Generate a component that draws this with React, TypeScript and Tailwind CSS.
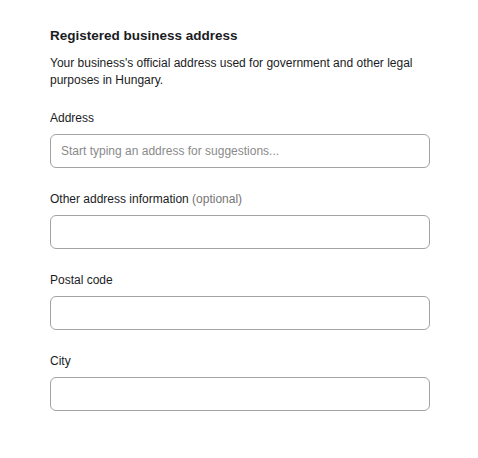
const fields = [
  { label: "Address", placeholder: "Start typing an address for suggestions..." },
  { label: "Other address information", optional: true },
  { label: "Postal code" },
  { label: "City" },
];

export default function App() {
  return (
    <div className="min-h-screen bg-white font-['Liberation_Sans',Arial,sans-serif] text-[#1a1c23]">
      <div className="w-[380px] pl-[50px] pt-[26px] box-content">
        <h2 className="text-[13.5px] font-bold leading-[20px]">Registered business address</h2>
        <p className="mt-[9px] text-[12px] leading-[17px]">
          Your business's official address used for government and other legal purposes in Hungary.
        </p>

        <div className="mt-[21px] flex flex-col gap-[23px]">
          {fields.map((f) => (
            <div key={f.label} className="flex flex-col gap-[8px]">
              <label className="text-[12px] leading-[16px]">
                {f.label}
                {f.optional && <span className="text-[#767676]"> (optional)</span>}
              </label>
              <input
                placeholder={f.placeholder}
                className="h-[34px] w-full rounded-[6px] border border-[#a3a3a3] px-[10px] text-[12px] outline-none placeholder:text-[#8a8a8a]"
              />
            </div>
          ))}
        </div>
      </div>
    </div>
  );
}
